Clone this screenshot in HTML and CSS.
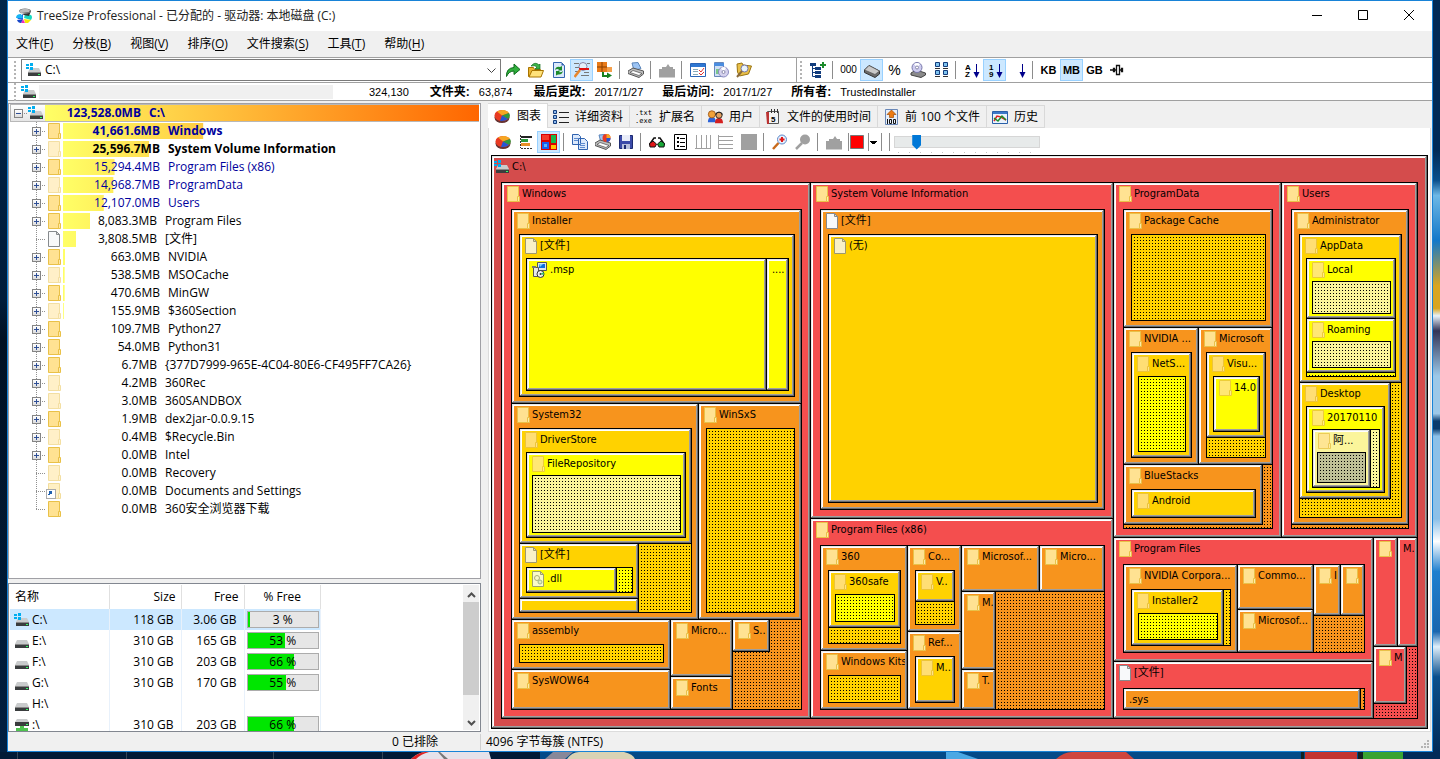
FILE: index.html
```html
<!DOCTYPE html>
<html lang="zh-CN">
<head>
    <meta charset="UTF-8">
    <meta name="viewport" content="width=device-width, initial-scale=1.0">
    <title>TreeSize Professional</title>
    <link rel="stylesheet" href="styles.css">
</head>
<body>
    <!-- Icon set -->
    <svg class="sprite" aria-hidden="true">
        <symbol id="i-app" viewBox="0 0 16 16"><path d="M1 11l6-5v5z" fill="#1670e8"/><path d="M0 10q0-4 5-4l2 4z" fill="#19b5f5"/><path d="M8 10l1-4 6 1q2 2 0 5z" fill="#18d9c0"/><path d="M8 11l7 1-3 3H9z" fill="#f4e800"/><path d="M7 11l2 4-4 0z" fill="#f02cc0"/><path d="M1 12l6-1-2 4q-3 0-4-3z" fill="#1746c8"/><ellipse cx="9" cy="3" rx="6" ry="2.500" fill="#666"/><path d="M3 3q5-4 11-1l-1 2-8 1z" fill="#bbb"/><path d="M3 4l3 2 7-1 2-2-2 5-5-1z" fill="#333"/></symbol>
        <symbol id="i-hdd" viewBox="0 0 16 16"><path d="M3 7h10l2 4H1z" fill="#c9cbcc"/><path d="M1 11h14v4H1z" fill="#3a3d3e"/><path d="M1 11h14v1H1z" fill="#888"/><path d="M12 13h2v1h-2z" fill="#3f6"/></symbol>
        <symbol id="i-drive" viewBox="0 0 16 16"><path d="M4 6h9l2 4H2z" fill="#c9cbcc"/><path d="M2 10h13v4H2z" fill="#3a3d3e"/><path d="M2 10h13v1H2z" fill="#888"/><path d="M12 12h2v1h-2z" fill="#3f6"/><path d="M0 2h3v2H0zM4 1h3v3H4zM0 5h3v2H0zM4 5h3v3H4z" fill="#00adef"/></symbol>
        <symbol id="i-net" viewBox="0 0 16 16"><path d="M3 2h10l2 3H1z" fill="#c9cbcc"/><path d="M1 5h14v4H1z" fill="#3a3d3e"/><path d="M12 7h2v1h-2z" fill="#3f6"/><path d="M6 9h4v2h4v4H2v-4h4z" fill="#4fc34f"/></symbol>
        <symbol id="i-folder" viewBox="0 0 13 16"><path d="M.5.5h11v15H.5z" fill="#ffe292" stroke="#e9c148"/><path d="M10.500 10.500h2v5h-2z" fill="#ffe9a8" stroke="#e9c148"/></symbol>
        <symbol id="i-file" viewBox="0 0 13 16"><path d="M.5.5h8l3 3v12H.5z" fill="#f8f9fa" stroke="#868a8d"/><path d="M8.500.5v3h3z" fill="#ddd" stroke="#868a8d"/></symbol>
        <symbol id="i-dll" viewBox="0 0 13 16"><path d="M.5.5h8l3 3v12H.5z" fill="#f8f9fa" stroke="#868a8d"/><path d="M8.500.5v3h3z" fill="#ddd" stroke="#868a8d"/><circle cx="5" cy="7" r="2.500" fill="none" stroke="#999"/><circle cx="8" cy="11" r="2" fill="#dfe7ec" stroke="#8aa"/></symbol>
        <symbol id="i-msp" viewBox="0 0 16 16"><path d="M5.500.5h9v8h-9z" fill="#dce6ea" stroke="#555"/><path d="M7 2h6v4H7z" fill="#0a6ee0"/><path d="M7 2h4l-3 3z" fill="#7cf"/><path d="M1.500 5.500h5v9h-5z" fill="#e8e8e8" stroke="#555"/><path d="M0 4h4v2H0z" fill="#777"/><circle cx="8.500" cy="12" r="3.500" fill="#eee" stroke="#333"/><path d="M8.500 12l3-2v3z" fill="#2c6"/><circle cx="8.500" cy="12" r="1" fill="#333"/></symbol>
        <symbol id="i-link" viewBox="0 0 13 16"><path d="M.5.5h11v15H.5z" fill="#fff0c4" stroke="#f2dd9c"/><path d="M10.500 10.500h2v5h-2z" fill="#fff5d8" stroke="#f2dd9c"/></symbol>
        <symbol id="i-go" viewBox="0 0 16 16"><path d="M1.500 14.500Q1 6 9 5.500V2l6 5.500-6 5V9Q4 9 1.500 14.500z" fill="#2fae3c" stroke="#0d6b1b"/></symbol>
        <symbol id="i-up" viewBox="0 0 16 16"><path d="M.5 5.500h5l1 2h6v7h-12z" fill="#e9b330" stroke="#a87400"/><path d="M1 15l3-6.500h11.500L13 15z" fill="#ffe27a" stroke="#a87400"/><path d="M3 4q4-5 8-1l1-1v5H7l2-2q-2-2-6-1z" fill="#3ab54a" stroke="#146e20" stroke-width=".7"/></symbol>
        <symbol id="i-refresh" viewBox="0 0 16 16"><path d="M2.500.5h8l3 3v12h-11z" fill="#dce9fb" stroke="#3565b0"/><path d="M10.500.5v3h3z" fill="#3565b0"/><path d="M4 8q1-4 5-3l2-1v4.500H7l1-1q-2-1-4 .5z" fill="#1c8a2b"/><path d="M12 9q-1 4-5 3.500l-2 1V9h4l-1 1q2 1 4-1z" fill="#1c8a2b"/></symbol>
        <symbol id="i-find" viewBox="0 0 16 16"><path d="M0 1.500h5M13 1.500h3M1 5.500h4M1 9.500h5M7 13.500h8M10 10.500h5" stroke="#777"/><circle cx="9" cy="4.500" r="4" fill="#e3f0fb" stroke="#88a"/><path d="M5 7h10" stroke="#e01010" stroke-width="2"/><path d="M6 8l-5.500 7" stroke="#e8862c" stroke-width="2.500"/></symbol>
        <symbol id="i-expand" viewBox="0 0 16 16"><path d="M0 0h10v10H0z" fill="#e87b1a"/><path d="M5 0v10M0 5h10" stroke="#8a4000"/><path d="M10 5h5v5h-5z" fill="#f4a04c"/><path d="M6 10v4h5" stroke="#18801f" stroke-width="2" fill="none"/><path d="M10 10.500l5 3-5 3z" fill="#18801f"/></symbol>
        <symbol id="i-print" viewBox="0 0 16 16"><path d="M4 1l6-.5 3 6-7 2z" fill="#9cc4f4" stroke="#5c86bb"/><path d="M0 9l5-3 10.500 3v3L11 15.500 0 11.500z" fill="#bdbdbd" stroke="#555"/><path d="M2 10.500l9 3 3-2-9-3z" fill="#fff" stroke="#333" stroke-width=".6"/></symbol>
        <symbol id="i-printchart" viewBox="0 0 16 16"><path d="M4 1l6-.5 3 6-7 2z" fill="#9cc4f4" stroke="#5c86bb"/><path d="M0 9l5-3 10.500 3v3L11 15.500 0 11.500z" fill="#bdbdbd" stroke="#555"/><path d="M2 10.500l9 3 3-2-9-3z" fill="#fff" stroke="#333" stroke-width=".6"/><circle cx="11.500" cy="4" r="4" fill="#e83a22"/><path d="M11.500 4h4a4 4 0 0 1-4 4z" fill="#2456d4"/><path d="M11.500 4V0a4 4 0 0 1 4 4z" fill="#f6a623"/></symbol>
        <symbol id="i-hand" viewBox="0 0 16 16"><path d="M0 15.500V7h3V5h4l2-3 2 3h3v2h2v8.500z" fill="#a0a0a0"/></symbol>
        <symbol id="i-cal" viewBox="0 0 16 16"><path d="M.5 1.500h15v13H.5z" fill="#fff" stroke="#2a64b8"/><path d="M1 2h14v3H1z" fill="#2f77d2"/><path d="M3 7.500h5M3 9.500h5M3 12.500h5" stroke="#8ab"/><path d="M9 8l2 2 3-4M9 11l2 2 3-3" stroke="#d33" fill="none"/></symbol>
        <symbol id="i-disc" viewBox="0 0 16 16"><path d="M1.500.5h9v14h-9z" fill="#cfe0f6" stroke="#6887b8"/><path d="M1 1h10v3H1z" fill="#4b8de0"/><path d="M3 7h5v5H3z" fill="#7bc88a"/><circle cx="10.500" cy="10" r="5" fill="#d5d2ee" stroke="#8a8ac0"/><path d="M10.500 10L8 6q3-2 5 0z" fill="#fff"/><circle cx="10.500" cy="10" r="1.500" fill="#fff" stroke="#88a"/></symbol>
        <symbol id="i-fsearch" viewBox="0 0 16 16"><path d="M1 2l5-1 1 2 8.500 1-3 8-9 2-2-4z" fill="#e9c048" stroke="#9a7412"/><circle cx="8.500" cy="6.500" r="3.500" fill="#e9f4fc" stroke="#77a"/><path d="M6 9l-5 6" stroke="#8a6a3a" stroke-width="2"/></symbol>
        <symbol id="i-treeplus" viewBox="0 0 16 16"><path d="M0 1h6v3H0zM5 5h6v3H5zM5 9h6v3H5zM5 13h6v3H5z" fill="#123c7c"/><path d="M2.500 4v10.500H6M2.500 6.500H6M2.500 10.500H6" stroke="#123c7c" fill="none"/><path d="M13 0v6M10 3h6" stroke="#1b8a2a" stroke-width="2"/></symbol>
        <symbol id="i-diskgray" viewBox="0 0 16 16"><path d="M.5 8L5 3.500 15.500 9v3L11 15.500.5 10.500z" fill="#6c6c6c" stroke="#333"/><path d="M.5 8L5 3.500 15.500 9 11 12.500z" fill="#c9c9c9" stroke="#555" stroke-width=".7"/></symbol>
        <symbol id="i-disk2" viewBox="0 0 16 16"><path d="M1 11l5-3 9.500 3v2L11 15.500 1 13z" fill="#8a8a8a" stroke="#444"/><circle cx="7" cy="5.500" r="5" fill="#cfcdf0" stroke="#77a"/><path d="M7 5.500L4 2q3-2 6 0z" fill="#fff"/><circle cx="7" cy="5.500" r="1.500" fill="#fff" stroke="#88a"/></symbol>
        <symbol id="i-grid" viewBox="0 0 16 16"><path d="M2.500.5h4v4h-4zM10.500.5h4v4h-4zM2.500 8.500h4v4h-4zM10.500 8.500h4v4h-4z" fill="#7fc4f0" stroke="#123c7c"/><path d="M2 6.500h5M10 6.500h5M2 14.500h5M10 14.500h5" stroke="#333"/></symbol>
        <symbol id="i-az" viewBox="0 0 16 16"><text x="1" y="8">A</text><text x="1" y="15">Z</text><path d="M12.500 2v9" stroke="#00008b"/><path d="M9.500 10h6l-3 6z" fill="#00008b"/></symbol>
        <symbol id="i-19" viewBox="0 0 16 16"><text x="2" y="8">1</text><text x="2" y="15">9</text><path d="M12.500 2v9" stroke="#00008b"/><path d="M9.500 10h6l-3 6z" fill="#00008b"/></symbol>
        <symbol id="i-down" viewBox="0 0 16 16"><path d="M12.500 2v9" stroke="#00008b"/><path d="M9.500 10h6l-3 6z" fill="#00008b"/></symbol>
        <symbol id="i-auto" viewBox="0 0 16 16"><path d="M6.500 3.500h3v9h-3zM3.500 6.500h1v3h-1zM11.500 6.500h1v3h-1zM0 8h7M10 8h3" stroke="#111" stroke-width="1.300" fill="none"/></symbol>
        <symbol id="i-pie" viewBox="0 0 16 16"><ellipse cx="8" cy="9.500" rx="7.500" ry="5.500" fill="#633"/><ellipse cx="8" cy="7.500" rx="7.500" ry="5.500" fill="#e83a22"/><path d="M8 7.500L3 3.500Q6 1.500 10 2q4 1 5 3z" fill="#f6a623"/><path d="M8 7.500L15 5q2 3-1 6z" fill="#2e9a3e"/><path d="M8 7.500l6 3.500q-3 2.500-8 2z" fill="#2456d4"/></symbol>
        <symbol id="i-details" viewBox="0 0 16 16"><path d="M.5 1.500h3v3h-3zM.5 6.500h3v3h-3zM.5 11.500h3v3h-3z" fill="#8bb8ee" stroke="#123c7c"/><path d="M6 3.500h10M6 8.500h10M6 13.500h10" stroke="#222"/></symbol>
        <symbol id="i-users" viewBox="0 0 18 16"><path d="M1 14q0-6 4.500-6T10 14z" fill="#2b62d8"/><circle cx="5.500" cy="5" r="4" fill="#f0a23a" stroke="#a05818"/><path d="M9 15q0-6 4.500-6T18 15z" fill="#d42020"/><circle cx="13.500" cy="6" r="3.500" fill="#e2a060" stroke="#222"/><path d="M9.500 6q4-6 8 0v-2q-4-4-8 0z" fill="#222"/></symbol>
        <symbol id="i-time" viewBox="0 0 16 16"><path d="M2.500 2.500h11v12h-11z" fill="#f3f3f3" stroke="#555"/><path d="M1 3h3v12H2z" fill="#b33"/><path d="M6.500 0v4M9.500 0v4M12.500 0v4" stroke="#333"/><text x="6" y="13">5</text></symbol>
        <symbol id="i-top" viewBox="0 0 16 16"><path d="M2.500.5h12v15h-12z" fill="#e7effa" stroke="#6987b7"/><path d="M8.500 1l4.500 4.500h-2.500v3h-4v-3H4z" fill="#ee7c14" stroke="#a24a00" stroke-width=".7"/><path d="M4.500 10v5M6.500 10.500h2v4h-2zM10.500 10.500h2v4h-2z" stroke="#111" fill="none"/></symbol>
        <symbol id="i-history" viewBox="0 0 16 16"><path d="M.5 2.500h15v12H.5z" fill="#eaf3fc" stroke="#2a5fa8"/><path d="M1 3h14v2H1z" fill="#3c78c8"/><path d="M2 12l3-5 4 1 5 3" stroke="#d22" stroke-width="1.500" fill="none"/><path d="M2 9l4 3 4-5 4 4" stroke="#1b8f2b" stroke-width="1.500" fill="none"/></symbol>
        <symbol id="i-hbars" viewBox="0 0 16 16"><path d="M2.500 1v13M3 14.500h12" stroke="#333" stroke-dasharray="2 1"/><path d="M3 2h11v2H3z" fill="#222"/><path d="M3 5h7v3H3z" fill="#2b9a3e"/><path d="M3 9h9v3H3z" fill="#e89028"/></symbol>
        <symbol id="i-map" viewBox="0 0 16 16"><path d="M0 0h16v16H0z" fill="#d80000"/><path d="M1 1h7v5H1z" fill="#f43a2a"/><path d="M10 1h5v8h-5z" fill="#17b84c"/><path d="M1 8h7v7H1z" fill="#1a5cf0"/><path d="M3 10h3v3H3z" fill="#5ab4ff"/><path d="M10 11h5v4h-5z" fill="#ffc400"/></symbol>
        <symbol id="i-copy" viewBox="0 0 16 16"><path d="M.5.5h6l2 2v8h-8zM6.500 4.500h6l3 3v8h-9z" fill="#dce9fb" stroke="#2f62b0"/><path d="M2 4.500h4M2 6.500h4M8 9.500h5M8 11.500h5M8 13.500h5" stroke="#5f8cd0"/></symbol>
        <symbol id="i-save" viewBox="0 0 16 16"><path d="M1.500 1.500h13v13h-13z" fill="#3b4aa8" stroke="#1c2a70"/><path d="M4 1h8v6H4z" fill="#e8ecf8"/><path d="M4 10h8v5H4z" fill="#b8c0dc"/><path d="M6 11h2v4H6z" fill="#1c2a70"/></symbol>
        <symbol id="i-glasses" viewBox="0 0 16 16"><path d="M0 11l5-7h2M16 11l-5-7H9" stroke="#111" stroke-width="1.500" fill="none"/><path d="M.5 9.500L4 7l3.500 3L6 13H1z" fill="#e01818" stroke="#111"/><path d="M8.500 10L12 7l3.500 2.500L15 13h-5z" fill="#18a838" stroke="#111"/></symbol>
        <symbol id="i-list" viewBox="0 0 16 16"><path d="M2.500.5h12v15h-12z" fill="#fff" stroke="#000"/><path d="M5 3h2v2H5zM5 7h2v2H5zM5 11h2v2H5z" fill="#000"/><path d="M8 4.500h5M8 8.500h5M8 12.500h5" stroke="#000"/></symbol>
        <symbol id="i-vlines" viewBox="0 0 16 16"><path d="M1.500 1v14M6.500 1v14M11.500 1v14M15.500 1v14M0 14.500h16" stroke="#a0a0a0"/></symbol>
        <symbol id="i-hlines" viewBox="0 0 16 16"><path d="M0 2.500h15M0 6.500h15M0 10.500h15M0 14.500h15M.5 1v14" stroke="#a0a0a0"/></symbol>
        <symbol id="i-square" viewBox="0 0 16 16"><path d="M0 0h16v16H0z" fill="#a0a0a0"/></symbol>
        <symbol id="i-zoom" viewBox="0 0 16 16"><circle cx="10" cy="5.500" r="4.500" fill="#e4f1fd" stroke="#5c86c8"/><path d="M10 3v5M7.500 5.500h5" stroke="#e01818" stroke-width="2"/><path d="M6.500 9L1 15" stroke="#c86a1c" stroke-width="2.500"/></symbol>
        <symbol id="i-zoomgray" viewBox="0 0 16 16"><circle cx="10" cy="5.500" r="5" fill="#a0a0a0"/><path d="M7 9l-6 6" stroke="#a0a0a0" stroke-width="2.500"/></symbol>
        <symbol id="i-red" viewBox="0 0 16 16"><path d="M1.500 1.500h13v13h-13z" fill="#f00" stroke="#777"/></symbol>
    </svg>

    <div class="desk-left"></div>
    <div class="window">
        <header class="titlebar">
            <svg class="icon"><use href="#i-app"/></svg>
            <h1>TreeSize Professional - 已分配的 - 驱动器: 本地磁盘 (C:)</h1>
            <button aria-label="Minimize"><svg viewBox="0 0 10 10"><path d="M0 5.500h10"/></svg></button>
            <button aria-label="Maximize"><svg viewBox="0 0 10 10"><path d="M.5.5h9v9h-9z"/></svg></button>
            <button aria-label="Close"><svg viewBox="0 0 10 10"><path d="M0 0l10 10M10 0L0 10"/></svg></button>
        </header>
        <nav class="menubar">
            <button>文件(<u>F</u>)</button>
            <button>分枝(<u>B</u>)</button>
            <button>视图(<u>V</u>)</button>
            <button>排序(<u>O</u>)</button>
            <button>文件搜索(<u>S</u>)</button>
            <button>工具(<u>T</u>)</button>
            <button>帮助(<u>H</u>)</button>
        </nav>

        <div class="toolbar">
            <span class="grip"></span>
            <div class="combo">
                <svg class="icon"><use href="#i-drive"/></svg>
                <input type="text" value="C:\" aria-label="Path">
                <button aria-label="Open list"><svg viewBox="0 0 9 5"><path d="M.5.5l4 4 4-4"/></svg></button>
            </div>
            <div class="band band-main">
                <button class="tool" aria-label="Go"><svg class="icon"><use href="#i-go"/></svg></button>
                <button class="tool" aria-label="Up"><svg class="icon"><use href="#i-up"/></svg></button>
                <button class="tool" aria-label="Refresh"><svg class="icon"><use href="#i-refresh"/></svg></button>
                <button class="tool on" aria-label="Find"><svg class="icon"><use href="#i-find"/></svg></button>
                <button class="tool" aria-label="Expand"><svg class="icon"><use href="#i-expand"/></svg></button>
                <span class="sep"></span>
                <button class="tool" aria-label="Print"><svg class="icon"><use href="#i-print"/></svg></button>
                <span class="sep"></span>
                <button class="tool" aria-label="Stop"><svg class="icon"><use href="#i-hand"/></svg></button>
                <span class="sep"></span>
                <button class="tool" aria-label="Options"><svg class="icon"><use href="#i-cal"/></svg></button>
                <button class="tool" aria-label="Software"><svg class="icon"><use href="#i-disc"/></svg></button>
                <button class="tool" aria-label="File search"><svg class="icon"><use href="#i-fsearch"/></svg></button>
            </div>
            <span class="grip narrow"></span>
            <div class="band">
                <button class="tool" aria-label="Expand tree"><svg class="icon"><use href="#i-treeplus"/></svg></button>
                <span class="sep"></span>
                <button class="tool txt thin">000</button>
                <button class="tool on" aria-label="Allocated"><svg class="icon"><use href="#i-diskgray"/></svg></button>
                <button class="tool txt pct">%</button>
                <button class="tool" aria-label="Compressed"><svg class="icon"><use href="#i-disk2"/></svg></button>
                <button class="tool" aria-label="Counts"><svg class="icon"><use href="#i-grid"/></svg></button>
                <span class="sep"></span>
                <button class="tool" aria-label="Sort by name"><svg class="icon"><use href="#i-az"/></svg></button>
                <button class="tool on" aria-label="Sort by size"><svg class="icon"><use href="#i-19"/></svg></button>
                <button class="tool" aria-label="Sort descending"><svg class="icon"><use href="#i-down"/></svg></button>
                <span class="sep"></span>
                <button class="tool txt">KB</button>
                <button class="tool txt on">MB</button>
                <button class="tool txt">GB</button>
                <button class="tool" aria-label="Automatic unit"><svg class="icon"><use href="#i-auto"/></svg></button>
            </div>
        </div>
        <div class="infobar">
            <span class="grip"></span>
            <svg class="icon"><use href="#i-drive"/></svg>
            <span class="blank"></span>
            <span class="count">324,130</span>
            <b>文件夹:</b><span class="count">63,874</span>
            <b>最后更改:</b><span class="date">2017/1/27</span>
            <b>最后访问:</b><span class="date">2017/1/27</span>
            <b>所有者:</b><span>TrustedInstaller</span>
        </div>

        <main class="panes">
            <section class="left">
                <ul class="tree" id="tree"></ul>
                <div class="drives">
                    <table>
                        <thead><tr><th>名称</th><th>Size</th><th>Free</th><th>% Free</th></tr></thead>
                        <tbody id="drives"></tbody>
                    </table>
                    <div class="scrollbar">
                        <button aria-label="Scroll up"><svg viewBox="0 0 9 6"><path d="M1 5l3.500-3.500L8 5"/></svg></button>
                        <span class="thumb"></span>
                        <button aria-label="Scroll down"><svg viewBox="0 0 9 6"><path d="M1 1l3.500 3.500L8 1"/></svg></button>
                    </div>
                </div>
            </section>
            <section class="right">
                <div class="tabs">
                    <button class="active"><svg class="icon"><use href="#i-pie"/></svg>图表</button>
                    <button><svg class="icon"><use href="#i-details"/></svg>详细资料</button>
                    <button><span class="ext">.txt<br>.exe</span>扩展名</button>
                    <button><svg class="icon"><use href="#i-users"/></svg>用户</button>
                    <button><svg class="icon"><use href="#i-time"/></svg>文件的使用时间</button>
                    <button><svg class="icon"><use href="#i-top"/></svg>前 100 个文件</button>
                    <button><svg class="icon"><use href="#i-history"/></svg>历史</button>
                </div>
                <div class="page">
                    <div class="band chartbar">
                        <button class="tool" aria-label="Pie chart"><svg class="icon"><use href="#i-pie"/></svg></button>
                        <button class="tool" aria-label="Bar chart"><svg class="icon"><use href="#i-hbars"/></svg></button>
                        <button class="tool on" aria-label="Treemap"><svg class="icon"><use href="#i-map"/></svg></button>
                        <span class="sep"></span>
                        <button class="tool" aria-label="Copy"><svg class="icon"><use href="#i-copy"/></svg></button>
                        <button class="tool" aria-label="Print chart"><svg class="icon"><use href="#i-printchart"/></svg></button>
                        <button class="tool" aria-label="Save"><svg class="icon"><use href="#i-save"/></svg></button>
                        <span class="sep"></span>
                        <button class="tool" aria-label="3D"><svg class="icon"><use href="#i-glasses"/></svg></button>
                        <button class="tool" aria-label="Legend"><svg class="icon"><use href="#i-list"/></svg></button>
                        <button class="tool" aria-label="Vertical lines"><svg class="icon"><use href="#i-vlines"/></svg></button>
                        <button class="tool" aria-label="Horizontal lines"><svg class="icon"><use href="#i-hlines"/></svg></button>
                        <button class="tool" aria-label="Pattern"><svg class="icon"><use href="#i-square"/></svg></button>
                        <span class="sep"></span>
                        <button class="tool" aria-label="Zoom in"><svg class="icon"><use href="#i-zoom"/></svg></button>
                        <button class="tool" aria-label="Zoom out"><svg class="icon"><use href="#i-zoomgray"/></svg></button>
                        <span class="sep"></span>
                        <button class="tool" aria-label="Pan"><svg class="icon"><use href="#i-hand"/></svg></button>
                        <span class="sep tight"></span>
                        <button class="color" aria-label="Colour"><svg class="icon"><use href="#i-red"/></svg></button>
                        <span class="sep tight"></span>
                        <button class="drop" aria-label="Colour list"></button>
                        <span class="sep"></span><span class="sep"></span>
                        <input class="slider" type="range" min="0" max="12" value="1" step="0.5" aria-label="Depth">
                    </div>
                    <div class="map" id="map"></div>
                </div>
            </section>
        </main>
        <footer class="status">
            <span class="excluded">0 已排除</span>
            <span class="cluster">4096 字节每簇 (NTFS)</span>
            <svg viewBox="0 0 9 9"><path d="M6 0h2v2H6zM3 3h2v2H3zM6 3h2v2H6zM0 6h2v2H0zM3 6h2v2H3zM6 6h2v2H6z"/></svg>
        </footer>
    </div>
    <div class="desk-right"></div>
    <svg class="desk-bottom" viewBox="0 0 1440 7" preserveAspectRatio="none" aria-hidden="true">
        <path d="M0 0h540v7H0z" fill="#011a36"/><path d="M540 0h900v7H540z" fill="#034a88"/>
        <path d="M17 0h1v7h-1zM126 0h1v7h-1zM273 0h1v7h-1zM382 0h1v7h-1z" fill="#345"/>
        <path d="M411 7q6-6 14-7h64l2 7z" fill="#e6e2ea"/><path d="M411 7q6-6 14-7h4q-8 2-13 7z" fill="#d22"/><path d="M440 0l8 7h-4l-6-7z" fill="#777"/>
        <path d="M545 7l8-7h20l-8 7z" fill="#889"/><path d="M567 7q5-7 12-7h45q9 2 11 7z" fill="#d9d3b4"/>
        <path d="M946 0h12l20 7h-32z" fill="#4aa8e4"/><path d="M1056 7q8-7 16-7h54l8 7z" fill="#cf463e"/>
        <path d="M1301 0h3v7h-3zM1358 0h5v7h-5z" fill="#122"/><path d="M1305 0h52v7h-52z" fill="#c33430"/><path d="M1363 0h40v7h-40z" fill="#38a332"/><path d="M1403 0h37v7h-37z" fill="#012b58"/>
    </svg>

    <script>
        const wideIcons = ['drive', 'hdd', 'net', 'msp'];
        const icon = (name) => `<svg class="${wideIcons.includes(name) ? 'icon' : 'sheet'}"><use href="#i-${name}"/></svg>`;

        // [size, name, percent of the drive, icon, expandable, text style, indent]
        const folders = [
            ['41,661.6MB', 'Windows', 33.7, 'folder', 1, 'bold blue', 'a'],
            ['25,596.7MB', 'System Volume Information', 20.7, 'light', 1, 'bold', 'a'],
            ['15,294.4MB', 'Program Files (x86)', 12.4, 'folder', 1, 'blue', 'a'],
            ['14,968.7MB', 'ProgramData', 12.1, 'light', 1, 'blue', 'a'],
            ['12,107.0MB', 'Users', 9.8, 'folder', 1, 'blue', 'a'],
            ['8,083.3MB', 'Program Files', 6.5, 'folder', 1, '', 'b'],
            ['3,808.5MB', '[文件]', 3.1, 'file', 0, '', 'b'],
            ['663.0MB', 'NVIDIA', 0.5, 'folder', 1, '', 'a'],
            ['538.5MB', 'MSOCache', 0.4, 'light', 1, '', 'a'],
            ['470.6MB', 'MinGW', 0.4, 'folder', 1, '', 'a'],
            ['155.9MB', '$360Section', 0.2, 'light', 1, '', 'a'],
            ['109.7MB', 'Python27', 0, 'folder', 1, '', 'a'],
            ['54.0MB', 'Python31', 0, 'folder', 1, '', 'a'],
            ['6.7MB', '{377D7999-965E-4C04-80E6-CF495FF7CA26}', 0, 'folder', 1, '', 'b'],
            ['4.2MB', '360Rec', 0, 'light', 1, '', 'b'],
            ['3.0MB', '360SANDBOX', 0, 'light', 1, '', 'b'],
            ['1.9MB', 'dex2jar-0.0.9.15', 0, 'folder', 1, '', 'b'],
            ['0.4MB', '$Recycle.Bin', 0, 'light', 1, '', 'b'],
            ['0.0MB', 'Intel', 0, 'folder', 1, '', 'b'],
            ['0.0MB', 'Recovery', 0, 'light', 0, '', 'b'],
            ['0.0MB', 'Documents and Settings', 0, 'link', 0, '', 'b'],
            ['0.0MB', '360安全浏览器下载', 0, 'folder', 0, '', 'b']
        ];

        const tree = document.getElementById('tree');
        tree.innerHTML = `
            <li class="root">
                <span class="branch"><button class="toggle open" aria-label="Collapse"></button></span>
                ${icon('drive')}
                <div class="cell"><span class="bar"></span><span class="text bold blue"><span class="size">123,528.0MB</span>C:\\</span></div>
            </li>` + folders.map(([size, name, pct, kind, more, style, indent]) => `
            <li>
                <span class="branch">${more ? `<button class="toggle" aria-label="Expand ${name}"></button>` : ''}</span>
                <span class="mark ${kind}">${icon(kind === 'light' ? 'folder' : kind)}</span>
                <div class="cell">
                    <span class="bar" style="clip-path: inset(0 ${100 - pct}% 0 0)"></span>
                    <span class="text ${style} ${indent}"><span class="size">${size}</span>${name}</span>
                </div>
            </li>`).join('');

        // Drive list
        const drives = [
            ['C:\\', 'drive', '118 GB', '3.06 GB', 3],
            ['E:\\', 'hdd', '310 GB', '165 GB', 53],
            ['F:\\', 'hdd', '310 GB', '203 GB', 66],
            ['G:\\', 'hdd', '310 GB', '170 GB', 55],
            ['H:\\', 'hdd', '', '', null],
            [':\\', 'net', '310 GB', '203 GB', 66]
        ];
        document.getElementById('drives').innerHTML = drives.map(([name, kind, size, free, pct]) => `
            <tr>
                <td><span class="drive">${icon(kind)}${name}</span></td>
                <td>${size}</td>
                <td>${free}</td>
                <td>${pct === null ? '' : `<div class="meter"><span class="fill" style="width: ${pct}%"></span><span class="value">${pct} %</span></div>`}</td>
            </tr>`).join('');

        // Treemap. t = folder tile, g = group without a frame, d = small files,
        // c = one tile in the corner of a small files area
        const t = (size, name, kids, kind = 'folder', dir = 'col') => ({ type: 'tile', size, name, kids, kind, dir });
        const g = (size, dir, kids) => ({ type: 'group', size, dir, kids });
        const d = (size) => ({ type: 'dots', size });
        const c = (size, w, h, kid) => ({ type: 'corner', size, w, h, kid });
        const file = '[文件]';

        const root = t(1, 'C:\\', [
            t(308, 'Windows', [
                t(193, 'Installer', [t(1, file, [t(238, '.msp', null, 'msp'), t(21, '....', null, '')], 'file', 'row')]),
                g(215, 'row', [
                    t(186, 'System32', [
                        t(114, 'DriverStore', [t(1, 'FileRepository', [d(1)])]),
                        g(68, 'row', [
                            g(118, 'col', [
                                t(54, file, [t(89, '.dll', null, 'dll'), d(15)], 'file', 'row'),
                                t(13, '', null, '')
                            ]),
                            d(52)
                        ])
                    ]),
                    t(102, 'WinSxS', [d(1)])
                ]),
                g(89, 'row', [
                    g(158, 'col', [t(49, 'assembly', [d(1)]), t(39, 'SysWOW64')]),
                    g(61, 'col', [t(56, 'Micro...'), t(32, 'Fonts')]),
                    c(68, 37 / 68, 32 / 89, t(1, 'S..'))
                ])
            ]),
            g(302, 'col', [
                t(334, 'System Volume Information', [t(1, file, [t(1, '(无)', null, 'file')], 'file')]),
                t(199, 'Program Files (x86)', [
                    g(86, 'col', [
                        t(104, '360', [t(56, '360safe', [d(1)]), d(15)]),
                        t(58, 'Windows Kits', [d(1)])
                    ]),
                    g(53, 'col', [
                        t(85, 'Co...', [t(30, 'V..'), d(22)]),
                        t(77, 'Ref...', [t(1, 'M..')])
                    ]),
                    g(142, 'col', [
                        g(45, 'row', [t(77, 'Microsof...'), t(64, 'Micro...')]),
                        g(117, 'row', [
                            g(33, 'col', [t(77, 'M.'), t(39, 'T.')]),
                            d(108)
                        ])
                    ])
                ], 'folder', 'row')
            ]),
            g(303, 'col', [
                g(353, 'row', [
                    t(167, 'ProgramData', [
                        t(117, 'Package Cache', [d(1)]),
                        g(135, 'row', [
                            t(74, 'NVIDIA ...', [t(1, 'NetS...', [d(1)])]),
                            t(73, 'Microsoft', [t(84, 'Visu...', [t(1, '14.0')]), d(18)])
                        ]),
                        c(63, 139 / 148, 60 / 63, t(1, 'BlueStacks', [t(1, 'Android')]))
                    ]),
                    t(135, 'Users', [
                        t(313, 'Administrator', [
                            t(147, 'AppData', [t(59, 'Local', [d(1)]), t(53, 'Roaming', [d(1)]), d(3)]),
                            c(134, 91 / 101, 116 / 134, t(1, 'Desktop', [
                                t(1, '20170110', [t(57, '阿...', [d(1)]), d(8)], 'folder', 'row')
                            ]))
                        ]),
                        d(3)
                    ])
                ]),
                g(180, 'row', [
                    g(259, 'col', [
                        t(123, 'Program Files', [
                            t(113, 'NVIDIA Corpora...', [t(91, 'Installer2', [d(1)]), d(6)], 'folder', 'row'),
                            g(75, 'col', [t(44, 'Commo...'), t(42, 'Microsof...')]),
                            g(50, 'col', [g(50, 'row', [t(26, 'I'), t(23, '')]), d(36)])
                        ], 'folder', 'row'),
                        t(56, file, [t(237, '.sys', null, ''), d(3)], 'file', 'row')
                    ]),
                    g(43, 'col', [
                        g(108, 'row', [t(23, ''), t(19, 'M..', null, '')]),
                        c(71, 33 / 43, 57 / 71, t(1, 'M'))
                    ])
                ])
            ])
        ], 'drive', 'row');

        // Sizes become the fr tracks of the grid that holds the tiles
        function tracks(kids, dir) {
            const list = kids.map(k => `minmax(0, ${k.size}fr)`).join(' ');
            return dir === 'row' ? `grid-template-columns: ${list}` : `grid-template-rows: ${list}`;
        }

        function draw(node, level) {
            if (node.type === 'dots') {
                return `<div class="dots level${level}"></div>`;
            }
            if (node.type === 'group') {
                return `<div class="group" style="${tracks(node.kids, node.dir)}">${node.kids.map(k => draw(k, level)).join('')}</div>`;
            }
            if (node.type === 'corner') {
                return `<div class="dots level${level}">
                    <div class="fit" style="width: ${node.w * 100}%; height: ${node.h * 100}%">${draw(node.kid, level)}</div></div>`;
            }
            const kids = node.kids ? `<div class="inner" style="${tracks(node.kids, node.dir)}">${node.kids.map(k => draw(k, level + 1)).join('')}</div>` : '';
            const label = node.kind || node.name ? `<div class="label">${node.kind ? icon(node.kind) : ''}<span>${node.name}</span></div>` : '';
            return `<div class="tile level${level}">${label}${kids}</div>`;
        }

        document.getElementById('map').innerHTML = draw(root, 0);
    </script>
</body>
</html>
```
FILE: styles.css
```css
* {
    box-sizing: border-box;
}
body {
    margin: 0;
    height: 100vh;
    display: grid;
    grid-template-columns: 7px minmax(0, 1fr) 7px;
    grid-template-rows: minmax(0, 1fr) 7px;
    overflow: hidden;
    background: #012447;
    color: #000;
    font-family: "Open Sans", "Noto Sans CJK SC", sans-serif;
    font-size: 12px;
    line-height: 16px;
}
button,
input {
    margin: 0;
    padding: 0;
    border: 0;
    background: none;
    color: inherit;
    font: inherit;
}
.sprite {
    position: absolute;
    width: 0;
    height: 0;
}
symbol text {
    font-family: "Liberation Sans", sans-serif;
    font-size: 8px;
    font-weight: bold;
}
.icon {
    width: 16px;
    height: 16px;
    flex: none;
}
.sheet {
    width: 13px;
    height: 16px;
    flex: none;
}

/* Desktop around the window */
.desk-left {
    background: linear-gradient(#01264a, #011c3a 40%, #001022 45%, #011f40);
}
.desk-right {
    background: linear-gradient(#012a56 20%, #0a4f8c 24%, #6db8e6 26%, #1478c8 32%, #d9a520 38%, #d9a520 41%, #e8f2fa 42%, #335 44%, #9cc8e8 50%, #9cc8e8 55%, #0a3a6c 56%, #0a3a6c 57%, #8cc0e8 58%, #8cc0e8 69%, #fff 72%, #1f7fce 76%, #1a66ae 84%, #dfeffa 86%, #0a4f8c 90%, #012b58);
}
.desk-bottom {
    grid-column: 1 / -1;
    width: 100%;
    height: 7px;
}

.window {
    display: flex;
    flex-direction: column;
    min-height: 0;
    background: #f0f0f0;
    border: 1px solid #1883d7;
}
.titlebar {
    display: flex;
    align-items: center;
    height: 30px;
    flex: none;
    padding-left: 8px;
    background: #fff;
}
.titlebar h1 {
    flex: 1;
    margin: 0 0 0 5px;
    font-size: 12px;
    font-weight: normal;
    color: #222;
}
.titlebar button {
    width: 46px;
    height: 30px;
}
.titlebar button svg {
    width: 10px;
    height: 10px;
    fill: none;
    stroke: #000;
    overflow: visible;
}
.menubar {
    display: flex;
    height: 26px;
    flex: none;
}
.menubar button {
    padding: 0 11px 0 8px;
}
.menubar u {
    text-underline-offset: 2px;
}

/* Toolbars */
.toolbar,
.infobar {
    display: flex;
    align-items: center;
    flex: none;
    background: #fff;
    border-top: 1px solid #a0a0a0;
}
.toolbar {
    height: 25px;
}
.infobar {
    height: 19px;
    border-bottom: 1px solid #a0a0a0;
    font-family: "Liberation Sans", "Noto Sans CJK SC", sans-serif;
    font-size: 11px;
}
.grip {
    width: 2px;
    height: 18px;
    margin: 0 5px 0 6px;
    background: repeating-linear-gradient(#b4b4b4 0 2px, transparent 2px 4px);
}
.grip.narrow {
    margin: 0 4px 0 3px;
}
.combo {
    display: flex;
    align-items: center;
    width: 480px;
    height: 22px;
    padding: 0 3px 0 4px;
    border: 1px solid #7a7a7a;
}
.combo input {
    flex: 1;
    min-width: 0;
    margin-left: 3px;
}
.combo button {
    display: flex;
    padding: 4px 1px;
}
.combo button svg {
    width: 9px;
    height: 5px;
    fill: none;
    stroke: #444;
}
.band {
    display: flex;
    align-items: center;
}
.band-main {
    height: 24px;
    padding-right: 41px;
    border-right: 1px solid #a0a0a0;
}
.tool {
    display: flex;
    align-items: center;
    justify-content: center;
    width: 23px;
    height: 22px;
    flex: none;
}
.tool.on {
    background: #cce8ff;
    border: 1px solid #99d1ff;
}
.tool.txt {
    font-family: "Liberation Sans", sans-serif;
    font-size: 11px;
    font-weight: bold;
}
.tool.thin {
    font-size: 10px;
    font-weight: normal;
}
.tool.pct {
    font-size: 14px;
    font-weight: normal;
}
.sep {
    width: 8px;
    height: 18px;
    flex: none;
    background: linear-gradient(#8c8c8c, #8c8c8c) 3px 0 / 1px 100% no-repeat;
}
.sep.tight {
    width: 4px;
}
.infobar .blank {
    width: 294px;
    height: 14px;
    margin: 0 36px 0 2px;
    background: #f0f0f0;
}
.infobar .count {
    margin-right: 21px;
}
.infobar b {
    margin-right: 9px;
    font-size: 12px;
}
.infobar .date {
    margin-right: 19px;
}

/* Panes */
.panes {
    flex: 1;
    min-height: 0;
    display: grid;
    grid-template-columns: minmax(0, 1fr) minmax(0, 2fr);
    gap: 5px;
    padding-top: 2px;
}
.left {
    display: flex;
    flex-direction: column;
    gap: 4px;
    min-height: 0;
}
.tree {
    flex: 1;
    min-height: 0;
    margin: 0;
    padding: 0 1px;
    overflow: hidden;
    list-style: none;
    background: #fff;
    border: 1px solid #a0a0a5;
}
.tree li {
    display: grid;
    grid-template-columns: 16px 15px minmax(0, 1fr);
    height: 18px;
    padding-left: 22px;
    align-items: center;
}
.tree .root {
    grid-template-columns: 14px 17px minmax(0, 1fr);
    padding-left: 4px;
    background: linear-gradient(#fff, #e4e4e4);
    box-shadow: inset 0 0 0 1px #b8b8b8;
}
.branch {
    height: 18px;
    display: flex;
    align-items: center;
    background:
        repeating-linear-gradient(#909090 0 1px, transparent 1px 2px) 4px 0 / 1px 100% no-repeat,
        repeating-linear-gradient(90deg, #909090 0 1px, transparent 1px 2px) 4px 9px / 10px 1px no-repeat;
}
.tree li:last-child .branch {
    background-size: 1px 9px, 10px 1px;
}
.tree .root .branch {
    background-size: 0 0, 10px 1px;
}
.toggle {
    width: 9px;
    height: 9px;
    border: 1px solid #848484;
    background:
        linear-gradient(#2f4f96, #2f4f96) center / 5px 1px no-repeat,
        linear-gradient(#2f4f96, #2f4f96) center / 1px 5px no-repeat,
        linear-gradient(#fff, #ddd);
}
.toggle.open {
    background:
        linear-gradient(#2f4f96, #2f4f96) center / 5px 1px no-repeat,
        linear-gradient(#fff, #ddd);
}
.mark {
    display: flex;
    position: relative;
}
.mark.light {
    opacity: 0.5;
}
.mark.link::after {
    content: "";
    position: absolute;
    left: -2px;
    bottom: 0;
    width: 8px;
    height: 8px;
    border: 1px solid #aaa;
    background:
        linear-gradient(#1f5fae, #1f5fae) 2px 1px / 3px 3px no-repeat,
        linear-gradient(#1f5fae, #1f5fae) 1px 4px / 2px 1px no-repeat,
        #fff;
}
.cell {
    display: grid;
    height: 16px;
}
.cell > * {
    grid-area: 1 / 1;
}
.bar {
    background: linear-gradient(90deg, #ffff66, #ff6600);
}
.text {
    z-index: 1;
    white-space: nowrap;
}
.size {
    display: inline-block;
    width: 97px;
    margin-right: 8px;
    text-align: right;
}
.b .size {
    width: 94px;
}
.root .size {
    width: 96px;
}
.bold {
    font-weight: bold;
}
.blue {
    color: #00009c;
}

.drives {
    display: flex;
    justify-content: space-between;
    height: 149px;
    flex: none;
    padding: 1px;
    overflow: hidden;
    background: #fff;
    border: 1px solid #828790;
}
.drives table {
    width: 311px;
    height: 150px;
    table-layout: fixed;
    border-collapse: collapse;
}
.drives th,
.drives td {
    padding: 0 7px;
    border-right: 1px solid #e8f1fb;
    text-align: right;
    font-weight: normal;
}
.drives th {
    height: 24px;
    padding: 0 5px;
    border-color: #e0e0e0;
}
.drives th:first-child {
    width: 99px;
    text-align: left;
}
.drives th:nth-child(2) {
    width: 72px;
}
.drives th:nth-child(3) {
    width: 63px;
}
.drives th:last-child {
    text-align: center;
}
.drives td {
    height: 21px;
}
.drives td:first-child,
.drives td:last-child {
    padding: 0 1px 0 2px;
}
.drives tbody tr:first-child {
    background: #cce8ff;
}
.drive {
    display: flex;
    align-items: center;
    gap: 2px;
    padding-left: 2px;
}
.meter {
    display: grid;
    height: 17px;
    border: 1px solid #acacac;
    background: #e6e6e6;
    text-align: center;
}
.meter > * {
    grid-area: 1 / 1;
}
.meter .value {
    line-height: 15px;
}
.fill {
    background: #00e600;
}
.scrollbar {
    display: flex;
    flex-direction: column;
    width: 16px;
    background: #f0f0f0;
}
.scrollbar button {
    height: 17px;
}
.scrollbar svg {
    width: 9px;
    height: 6px;
    fill: none;
    stroke: #505050;
    stroke-width: 2px;
}
.thumb {
    height: 93px;
    margin-bottom: auto;
    background: #cdcdcd;
}

/* Chart side */
.right {
    display: flex;
    flex-direction: column;
    min-height: 0;
    padding: 0 1px 0 2px;
}
.tabs {
    display: flex;
    align-items: flex-end;
    height: 25px;
    flex: none;
}
.tabs button {
    display: flex;
    align-items: center;
    gap: 6px;
    height: 23px;
    padding: 0 6px 0 5px;
    border: 1px solid #d9d9d9;
    border-left: 0;
    background: #f0f0f0;
}
.tabs .active {
    height: 25px;
    gap: 7px;
    padding-left: 6px;
    background: #fff;
    border-bottom: 0;
}
.ext {
    width: 18px;
    font-family: "DejaVu Sans Mono", monospace;
    font-size: 7px;
    line-height: 8px;
    text-align: left;
}
.page {
    flex: 1;
    min-height: 0;
    display: flex;
    flex-direction: column;
    padding: 0 2px 2px 2px;
    background: #fff;
    border: 1px solid #dcdcdc;
    border-top: 0;
}
.chartbar {
    height: 27px;
    flex: none;
}
.color {
    display: flex;
}
.drop {
    width: 9px;
    height: 18px;
    background: linear-gradient(#000, #000) 1px 8px / 7px 1px no-repeat, linear-gradient(#000, #000) 2px 9px / 5px 1px no-repeat, linear-gradient(#000, #000) 3px 10px / 3px 1px no-repeat;
}
.slider {
    appearance: none;
    width: 146px;
    height: 22px;
    background: repeating-linear-gradient(90deg, #c4c4c4 0 1px, transparent 1px 11px) 4px 100% / 138px 1px no-repeat;
}
.slider::-webkit-slider-runnable-track {
    height: 12px;
    background: #e7eaea;
    border: 1px solid #d6d6d6;
}
.slider::-webkit-slider-thumb {
    appearance: none;
    width: 9px;
    height: 15px;
    margin: -2px 0 0 6px;
    background: #0078d7;
    clip-path: polygon(0 0, 100% 0, 100% 70%, 50% 100%, 0 70%);
}

/* Treemap */
.map {
    flex: 1;
    min-height: 0;
    display: grid;
    grid-template: minmax(0, 1fr) / minmax(0, 1fr);
    padding: 1px;
    background: #000;
    font-family: "DejaVu Sans Condensed", "Noto Sans CJK SC", sans-serif;
    font-size: 11px;
}
.level0 { --fill: #d44c4c; --top: 26px; --side: 9px; --end: 9px; }
.level1 { --fill: #f44e4e; --top: 26px; --side: 9px; --end: 8px; }
.level2 { --fill: #f7941d; --top: 24px; --side: 7px; --end: 6px; }
.level3 { --fill: #ffd200; --top: 23px; --side: 6px; --end: 5px; }
.level4 { --fill: #ffff00; --top: 22px; --side: 5px; --end: 4px; }
.level5 { --fill: #fbf59b; --top: 22px; --side: 4px; --end: 4px; }
.level6 { --fill: #bfc096; --top: 22px; --side: 4px; --end: 4px; }
.tile {
    display: flex;
    flex-direction: column;
    min-width: 0;
    min-height: 0;
    padding: 0 var(--end) var(--end) var(--side);
    overflow: hidden;
    background: var(--fill);
    box-shadow: inset -1px -1px #696969, inset 1px 1px #e8e8e8, inset -2px -2px #a0a0a0, inset 2px 2px #fff;
}
.inner,
.group {
    display: grid;
    grid-template: minmax(0, 1fr) / minmax(0, 1fr);
    gap: 1px;
    min-width: 0;
    min-height: 0;
    background: #000;
}
.inner {
    flex: 1;
    padding: 1px;
}
.label {
    display: flex;
    gap: 2px;
    height: var(--top);
    flex: none;
    padding-top: 3px;
    margin: 0 calc(2px - var(--end)) 0 calc(5px - var(--side));
    overflow: hidden;
    white-space: nowrap;
    line-height: 15px;
}
.level0 > .label {
    margin-left: -7px;
}
.dots {
    min-width: 0;
    min-height: 0;
    background:
        repeating-linear-gradient(90deg, var(--fill) 0 2px, transparent 2px 3px),
        repeating-linear-gradient(var(--fill) 0 2px, #000 2px 3px);
}
.fit {
    display: grid;
    grid-template: minmax(0, 1fr) / minmax(0, 1fr);
    border: solid #000;
    border-width: 0 1px 1px 0;
}
.level3 > .label .sheet,
.level4 > .label .sheet,
.level5 > .label .sheet {
    opacity: 0.8;
}

.status {
    display: flex;
    align-items: center;
    height: 19px;
    flex: none;
}
.excluded {
    width: calc((100% - 5px) / 3);
    padding-right: 42px;
    border-right: 1px solid #d0d0d0;
    text-align: right;
}
.cluster {
    flex: 1;
    padding-left: 5px;
}
.status svg {
    width: 9px;
    height: 9px;
    margin: auto 2px 2px 0;
    fill: #b4b4b4;
}
```
